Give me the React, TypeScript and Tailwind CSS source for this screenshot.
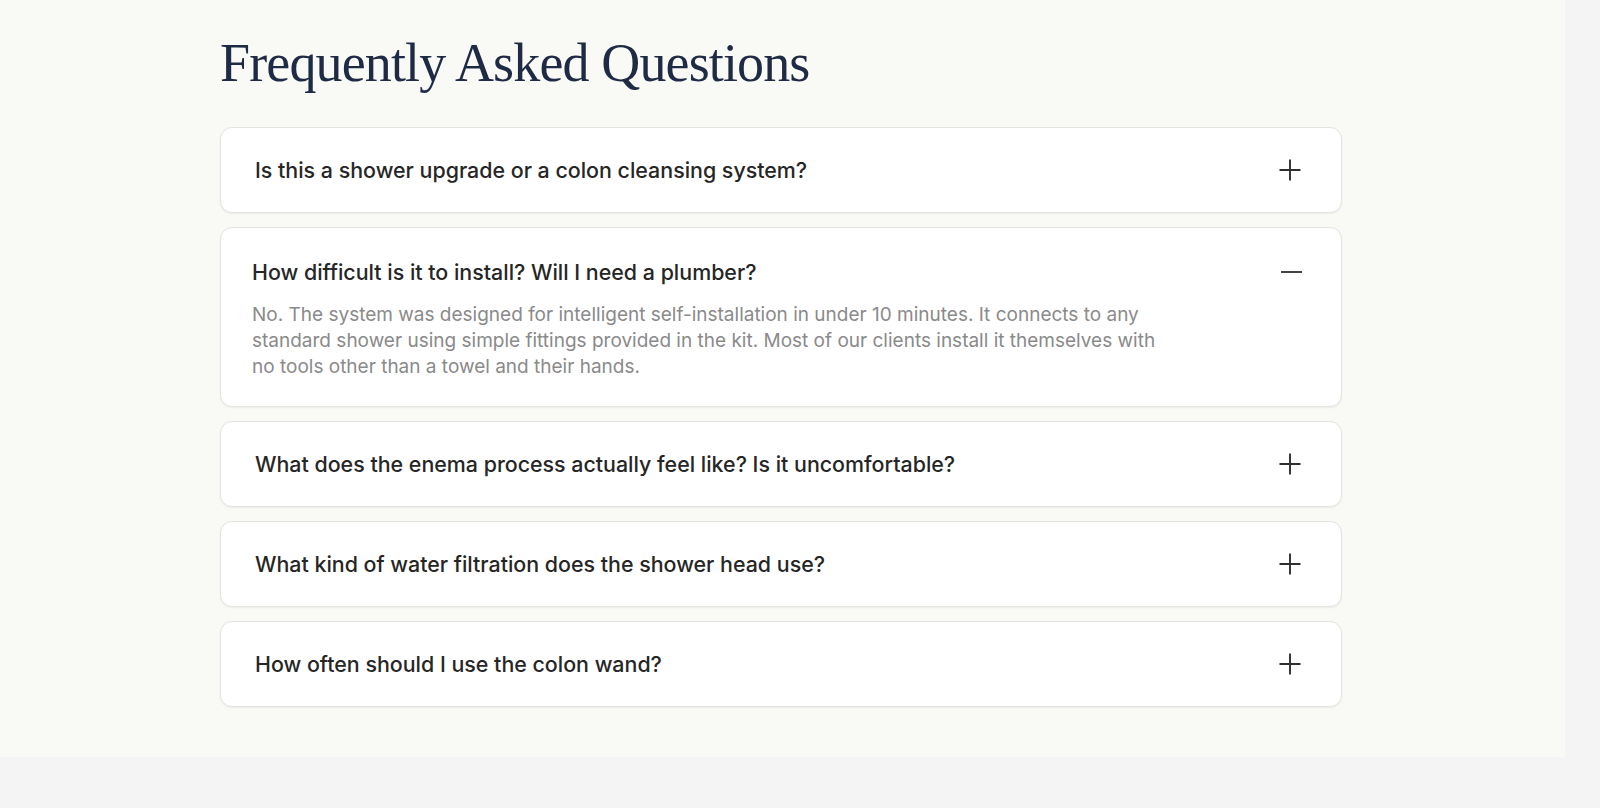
import React, { useState } from 'react';

const FAQS = [
  {
    q: 'Is this a shower upgrade or a colon cleansing system?',
    a: 'Both. The shower head filters your everyday water, and the detachable wand lets you switch to a gentle cleansing mode whenever you choose.',
  },
  {
    q: 'How difficult is it to install? Will I need a plumber?',
    a: 'No. The system was designed for intelligent self-installation in under 10 minutes. It connects to any standard shower using simple fittings provided in the kit. Most of our clients install it themselves with no tools other than a towel and their hands.',
  },
  {
    q: 'What does the enema process actually feel like? Is it uncomfortable?',
    a: 'Most people describe it as a warm, gentle rinse. Pressure and temperature are fully adjustable, so you stay in control the whole time.',
  },
  {
    q: 'What kind of water filtration does the shower head use?',
    a: 'A multi-stage cartridge that reduces chlorine, heavy metals and sediment before water reaches your skin.',
  },
  {
    q: 'How often should I use the colon wand?',
    a: 'That depends on your routine. Many clients use it once or twice a week; follow the guidance in your welcome booklet.',
  },
];

const PlusIcon = () => (
  <svg width="22" height="22" viewBox="0 0 22 22" className="shrink-0 text-[#2f2f2f]">
    <path d="M0.5 11H21.5M11 0.5V21.5" stroke="currentColor" strokeWidth="1.9" fill="none" />
  </svg>
);

const MinusIcon = () => (
  <svg width="21" height="22" viewBox="0 0 21 22" className="shrink-0 text-[#3a3a3a]">
    <path d="M0 11H21" stroke="currentColor" strokeWidth="1.9" fill="none" />
  </svg>
);

const App: React.FC = () => {
  const [open, setOpen] = useState<number | null>(1);

  return (
    <div className="min-h-screen bg-[#f4f4f4]" style={{ fontFamily: 'Inter, "Noto Sans", sans-serif' }}>
      <section className="w-[1565px] bg-[#f9f9f6] pt-[34px] pb-[50px]">
        <div className="ml-[220px] w-[1122px]">
          <h2
            className="text-[54px] leading-[1.1] tracking-[-0.016em] text-[#1f2b45]"
            style={{ fontFamily: '"Liberation Serif", "DejaVu Serif", serif' }}
          >
            Frequently Asked Questions
          </h2>

          <div className="mt-[34px] flex flex-col gap-[14px]">
            {FAQS.map((item, i) => {
              const isOpen = open === i;
              return (
                <div
                  key={item.q}
                  className="rounded-[12px] border border-[#e4e4e1] bg-white shadow-[0_1px_2px_rgba(0,0,0,0.06)]"
                >
                  {isOpen ? (
                    <div className="pt-[30px] pb-[26px] pl-[31px] pr-[39px]">
                      <button
                        onClick={() => setOpen(null)}
                        className="flex w-full items-center justify-between text-left"
                      >
                        <span className="text-[21.4px] leading-[28px] font-medium text-[#262626]">{item.q}</span>
                        <MinusIcon />
                      </button>
                      <p className="mt-[16px] max-w-[930px] text-[19px] leading-[26px] text-[#8a8a8a]">{item.a}</p>
                    </div>
                  ) : (
                    <button
                      onClick={() => setOpen(i)}
                      className="flex w-full items-center justify-between py-[28px] pl-[34px] pr-[40px] text-left"
                    >
                      <span className="text-[21.4px] leading-[28px] font-medium text-[#262626]">{item.q}</span>
                      <PlusIcon />
                    </button>
                  )}
                </div>
              );
            })}
          </div>
        </div>
      </section>
    </div>
  );
};

export default App;
